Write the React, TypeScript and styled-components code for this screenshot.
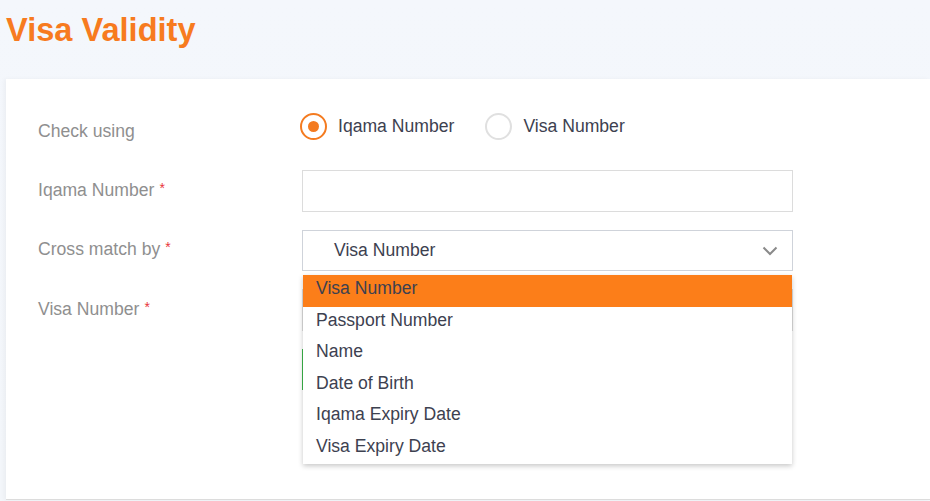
import styled, { createGlobalStyle } from 'styled-components';

const GlobalStyle = createGlobalStyle`
  html, body {
    margin: 0;
    padding: 0;
    background: #f4f7fc;
    font-family: "Liberation Sans", Arial, sans-serif;
  }
`;

const Page = styled.div`
  width: 930px;
  height: 501px;
  overflow: hidden;
  background: linear-gradient(180deg, #f4f7fc 0%, #f3f6fa 100%);
`;

const Header = styled.header`
  height: 79px;
  padding-left: 6px;
  box-sizing: border-box;
`;

const Title = styled.h1`
  margin: 0;
  padding-top: 11px;
  font-size: 32.6px;
  line-height: 37px;
  font-weight: 700;
  color: #f77b1f;
`;

const Card = styled.section`
  margin-left: 6px;
  height: 421px;
  box-sizing: border-box;
  background: #fff;
  border-bottom: 1px solid #dcdcdc;
  box-shadow: -2px 0 4px rgba(0, 0, 0, 0.04);
  padding: 27px 0 0 32px;
`;

const Row = styled.div<{ $gap?: number }>`
  display: grid;
  grid-template-columns: 264px 491px;
  align-items: center;
  margin-bottom: ${(p) => p.$gap ?? 18}px;
`;

const Label = styled.div<{ $offset?: number }>`
  font-size: 17.6px;
  color: #8f8f8f;
  margin-top: ${(p) => p.$offset ?? -2}px;
`;

const Req = styled.span`
  color: #e8353b;
  font-size: 14px;
  margin-left: 5px;
  vertical-align: 3px;
`;

const RadioGroup = styled.div`
  display: flex;
  align-items: center;
  height: 40px;
  margin-left: -2px;
  gap: 31px;
`;

const RadioOption = styled.label`
  display: flex;
  align-items: center;
  gap: 11px;
  font-size: 17.6px;
  color: #3d4150;
`;

const RadioCircle = styled.span<{ $checked?: boolean }>`
  width: 27px;
  height: 27px;
  box-sizing: border-box;
  border-radius: 50%;
  border: 2px solid ${(p) => (p.$checked ? '#f47b20' : '#e0e0e0')};
  display: flex;
  align-items: center;
  justify-content: center;
  &::after {
    content: '';
    width: 11px;
    height: 11px;
    border-radius: 50%;
    background: ${(p) => (p.$checked ? '#f47b20' : 'transparent')};
  }
`;

const Input = styled.input`
  height: 42px;
  box-sizing: border-box;
  border: 1px solid #dcdcdc;
  background: #fff;
  outline: none;
  font: inherit;
`;

const SelectWrap = styled.div`
  position: relative;
`;

const SelectBox = styled.div`
  height: 41px;
  box-sizing: border-box;
  border: 1px solid #cfd3da;
  display: flex;
  align-items: center;
  justify-content: space-between;
  padding: 0 14px 0 31px;
  font-size: 17.6px;
  color: #3d4150;
`;

const Menu = styled.ul`
  position: absolute;
  top: 45px;
  left: 1px;
  right: 1px;
  margin: 0;
  padding: 0;
  list-style: none;
  background: #fff;
  box-shadow: 0 2px 5px rgba(0, 0, 0, 0.22);
  z-index: 5;
`;

const MenuItem = styled.li<{ $active?: boolean }>`
  height: 31.5px;
  line-height: 26px;
  padding-left: 13px;
  font-size: 17.6px;
  color: #3d4150;
  background: ${(p) => (p.$active ? '#fc7e19' : 'transparent')};
`;

const SubmitButton = styled.button`
  justify-self: start;
  width: 120px;
  height: 41px;
  border: 1px solid #3cb64a;
  background: #fff;
`;

const options = [
  'Visa Number',
  'Passport Number',
  'Name',
  'Date of Birth',
  'Iqama Expiry Date',
  'Visa Expiry Date',
];

const Chevron = () => (
  <svg width="16" height="10" viewBox="0 0 16 10">
    <polyline points="1.5,1.5 8,8 14.5,1.5" fill="none" stroke="#8a8a8a" strokeWidth="2" />
  </svg>
);

export default function App() {
  return (
    <Page>
      <GlobalStyle />
      <Header>
        <Title>Visa Validity</Title>
      </Header>
      <Card>
        <Row $gap={24}>
          <Label $offset={10}>Check using</Label>
          <RadioGroup>
            <RadioOption>
              <RadioCircle $checked />
              Iqama Number
            </RadioOption>
            <RadioOption>
              <RadioCircle />
              Visa Number
            </RadioOption>
          </RadioGroup>
        </Row>
        <Row>
          <Label>
            Iqama Number<Req>*</Req>
          </Label>
          <Input />
        </Row>
        <Row>
          <Label>
            Cross match by<Req>*</Req>
          </Label>
          <SelectWrap>
            <SelectBox>
              Visa Number
              <Chevron />
            </SelectBox>
            <Menu>
              {options.map((o, i) => (
                <MenuItem key={o} $active={i === 0}>
                  {o}
                </MenuItem>
              ))}
            </Menu>
          </SelectWrap>
        </Row>
        <Row>
          <Label>
            Visa Number<Req>*</Req>
          </Label>
          <Input />
        </Row>
        <Row>
          <span />
          <SubmitButton aria-label="Check" />
        </Row>
      </Card>
    </Page>
  );
}
